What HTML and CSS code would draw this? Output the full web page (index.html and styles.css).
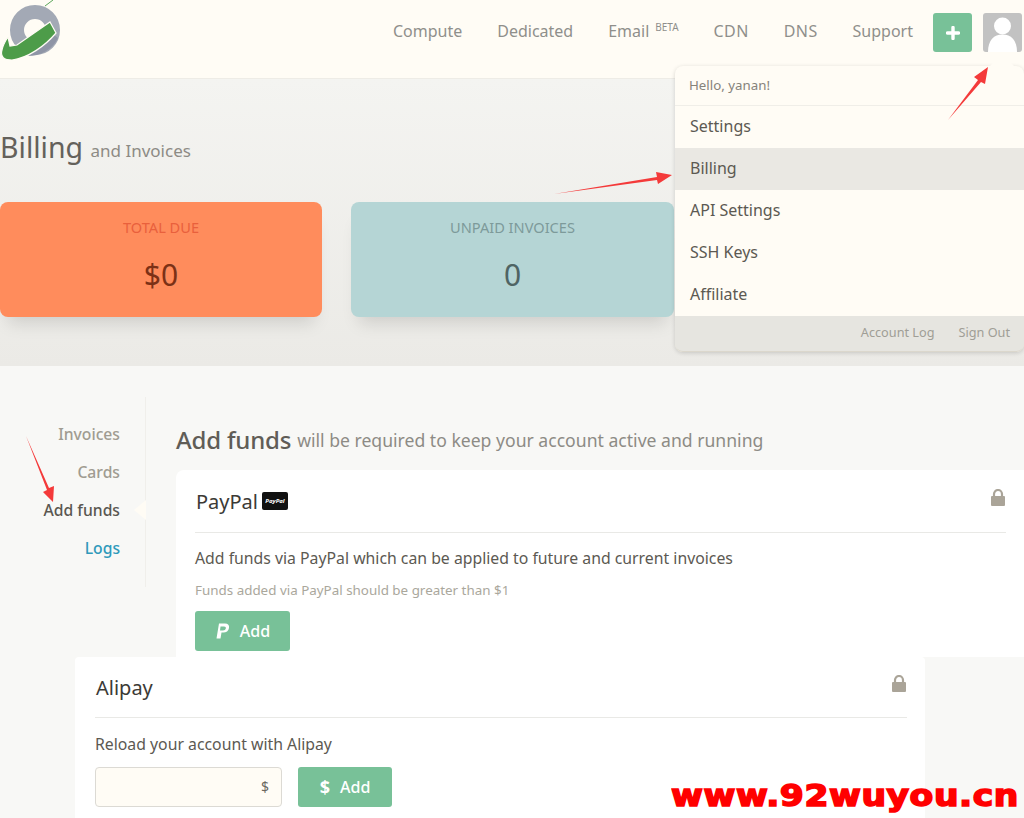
FILE: index.html
```html
<!DOCTYPE html>
<html lang="en">
<head>
<meta charset="utf-8">
<title>Billing and Invoices</title>
<link rel="stylesheet" href="styles.css">
</head>
<body>
<div class="page">
  <header class="topbar">
    <svg class="logo" width="62" height="62" viewBox="0 0 62 62">
      <path d="M45 6L53 0" stroke="#5aa65a" stroke-width="1" fill="none"/>
      <circle cx="35" cy="30" r="18" fill="none" stroke="#a3a9b5" stroke-width="14"/>
      <path d="M28 56C40 56 52 50 58 38L50 32Z" fill="#8f95a6"/>
      <path d="M50 22L56 33C45 46 28 58 12 60C4 60 0 57 2 50C3 45 6 40 8 37L10 46L17 45Z" fill="#4d9c49" stroke="#fffcf5" stroke-width="1.2"/>
    </svg>
    <nav class="mainnav">
      <a>Compute</a>
      <a>Dedicated</a>
      <a>Email<sup>BETA</sup></a>
      <a class="caps">CDN</a>
      <a class="caps">DNS</a>
      <a>Support</a>
    </nav>
    <div class="actions">
      <div class="plus">
        <svg width="14" height="14" viewBox="0 0 14 14"><path d="M7 1.5v11M1.5 7h11" stroke="#fff" stroke-width="3.4" stroke-linecap="round"/></svg>
      </div>
      <div class="avatar">
        <svg width="39" height="39" viewBox="0 0 39 39"><circle cx="19.5" cy="13" r="8.5" fill="#fff"/><path d="M5 39C5 27 11 21.500 19.500 21.500S34 27 34 39Z" fill="#fff"/></svg>
      </div>
    </div>
  </header>

  <section class="hero">
    <h1>Billing <small>and Invoices</small></h1>
    <div class="stats">
      <div class="stat stat-due">
        <div class="stat-label">TOTAL DUE</div>
        <div class="stat-value">$0</div>
      </div>
      <div class="stat stat-unpaid">
        <div class="stat-label">UNPAID INVOICES</div>
        <div class="stat-value">0</div>
      </div>
    </div>
  </section>

  <section class="content">
    <aside class="sidenav">
      <a>Invoices</a>
      <a>Cards</a>
      <a class="active">Add funds</a>
      <a class="logs">Logs</a>
    </aside>
    <main class="main">
      <h2>Add funds <small>will be required to keep your account active and running</small></h2>
      <div class="card">
        <div class="card-head">
          <span class="card-title">PayPal</span>
          <span class="pp-badge">PayPal</span>
          <svg class="lock" width="14" height="17" viewBox="0 0 14 17"><path d="M3 8V5a4 4 0 0 1 8 0v3" fill="none" stroke="#aaa498" stroke-width="2.200"/><rect y="7" width="14" height="10" rx="1" fill="#aaa498"/></svg>
        </div>
        <p class="card-text">Add funds via PayPal which can be applied to future and current invoices</p>
        <p class="card-note">Funds added via PayPal should be greater than $1</p>
        <button class="btn">
          <svg width="15" height="16" viewBox="0 0 15 16"><path d="M4 0.500h6c3 0 4.500 1.500 4 4.500c-0.500 3-2.800 4.500-5.500 4.500H6.500L5.500 15.500H1.500Z" fill="#fff"/><path d="M5.500 3.500h3.500c1.500 0 2 0.800 1.800 2c-0.300 1.300-1.300 2-2.800 2H5Z" fill="#78c198"/></svg>
          <span>Add</span>
        </button>
      </div>
    </main>
  </section>

  <div class="dropdown">
    <div class="dd-hello">Hello, yanan!</div>
    <a class="dd-item">Settings</a>
    <a class="dd-item dd-active">Billing</a>
    <a class="dd-item">API Settings</a>
    <a class="dd-item">SSH Keys</a>
    <a class="dd-item">Affiliate</a>
    <div class="dd-foot"><a>Account Log</a><a>Sign Out</a></div>
  </div>

  <div class="alipay">
    <div class="card-head alipay-head">
      <span class="card-title">Alipay</span>
      <svg class="lock" width="14" height="17" viewBox="0 0 14 17"><path d="M3 8V5a4 4 0 0 1 8 0v3" fill="none" stroke="#aaa498" stroke-width="2.200"/><rect y="7" width="14" height="10" rx="1" fill="#aaa498"/></svg>
    </div>
    <p class="card-text alipay-text">Reload your account with Alipay</p>
    <div class="alipay-form">
      <div class="amount">$</div>
      <button class="btn btn-alipay"><span class="dollar">$</span><span>Add</span></button>
    </div>
  </div>

  <svg class="arrows" width="1024" height="818" viewBox="0 0 1024 818">
    <path d="M948 120L978 80L974 77L988 67L985 84L981 82Z" fill="#f43a3a"/>
    <path d="M554 194L657 177L656 172L672 175L658 184L657 180Z" fill="#f43a3a"/>
    <path d="M26 436L49 488L54 486L53 502L43 492L47 490Z" fill="#f43a3a"/>
  </svg>
  <div class="watermark">www.92wuyou.cn</div>
</div>
</body>
</html>
```
FILE: styles.css
```css
* { box-sizing: border-box; }
html, body { margin: 0; padding: 0; }
body { font-family: "Noto Sans", "Open Sans", sans-serif; color: #555149; }
.page { position: relative; width: 1024px; height: 818px; overflow: hidden; display: flex; flex-direction: column; background: #f8f8f6; }

.topbar { height: 79px; flex: none; display: flex; align-items: flex-start; background: #fffcf5; border-bottom: 1px solid #eeece6; }
.logo { display: block; flex: none; }
.mainnav { margin-left: auto; display: flex; gap: 35px; padding-top: 19px; font-size: 16px; line-height: 24px; color: #8f8f8b; }
.mainnav sup { font-size: 10px; line-height: 0; margin-left: 6px; vertical-align: 6px; }
.mainnav .caps { letter-spacing: .4px; }
.actions { display: flex; gap: 11px; margin-left: 20px; padding: 13px 2px 0 0; }
.plus { width: 39px; height: 39px; border-radius: 3px; background: #78c198; display: flex; align-items: center; justify-content: center; }
.avatar { width: 39px; height: 39px; border-radius: 3px; background: #c2c2c2; overflow: hidden; }
.avatar svg { display: block; }

.hero { height: 287px; flex: none; background: linear-gradient(#f4f4f1, #ebeae6); padding-top: 48px; }
.hero h1 { margin: 0; font-size: 28.5px; line-height: 40px; font-weight: 400; color: #64615b; }
.hero h1 small { font-size: 17px; color: #8d8b85; vertical-align: 1px; }
.stats { display: flex; gap: 29px; margin-top: 31px; }
.stat { width: 322px; height: 115px; border-radius: 8px; text-align: center; padding-top: 15px; box-shadow: 0 14px 16px -8px rgba(0,0,0,.13); }
.stat-label { font-size: 14.6px; line-height: 20px; }
.stat-value { font-size: 30px; line-height: 40px; margin-top: 18px; }
.stat-due { background: #ff8c5c; }
.stat-due .stat-label { color: #e9603c; }
.stat-due .stat-value { color: #7c3116; }
.stat-unpaid { width: 323px; background: #b5d5d5; }
.stat-unpaid .stat-label { color: #7d9a9a; }
.stat-unpaid .stat-value { color: #4f6464; }

.content { flex: 1; display: flex; }
.sidenav { width: 146px; height: 190px; margin-top: 31px; padding: 25px 25px 0 0; border-right: 1px solid #f0efeb; display: flex; flex-direction: column; align-items: flex-end; gap: 14px; font-size: 15.7px; font-weight: 500; line-height: 24px; color: #a09c91; position: relative; }
.sidenav .active { color: #5a5751; }
.sidenav .logs { color: #2f9abb; }
.sidenav .active::after { content: ""; position: absolute; right: -1px; top: 103px; border: 10px solid transparent; border-left-width: 0; border-right-width: 12px; border-right-color: #fffcf5; }
.main { flex: 1; padding: 59px 0 0 30px; min-width: 0; }
.main h2 { margin: 0 0 15px; font-size: 24px; line-height: 30px; font-weight: 500; color: #605d57; white-space: nowrap; letter-spacing: -.2px; }
.main h2 small { font-size: 17.6px; font-weight: 400; color: #8d8b85; vertical-align: 2px; letter-spacing: 0; }
.card { background: #fff; border-radius: 8px 0 0 0; height: 187px; padding: 0 18px 0 19px; }
.card-head { height: 63px; display: flex; align-items: center; gap: 4px; border-bottom: 1px solid #e9e9e6; position: relative; }
.card-title { font-size: 20px; color: #3c3a36; margin-left: 1px; }
.pp-badge { width: 26px; height: 18px; border-radius: 2px; background: #111; color: #fff; font-size: 6px; font-weight: 700; font-style: italic; display: flex; align-items: center; justify-content: center; }
.lock { position: absolute; right: 1px; top: 19px; }
.card-text { margin: 13px 0 0; font-size: 15.8px; line-height: 24px; color: #5c5952; white-space: nowrap; }
.card-note { margin: 10px 0 0; font-size: 13.4px; line-height: 20px; color: #aaa79c; }
.btn { margin-top: 11px; width: 95px; height: 40px; border: 0; border-radius: 3px; background: #78c198; color: #fff; font: inherit; font-size: 16px; font-weight: 500; display: flex; align-items: center; justify-content: center; gap: 10px; padding: 0; }

.dropdown { position: absolute; left: 675px; top: 66px; width: 349px; height: 286px; background: #fffcf5; border-radius: 8px; box-shadow: 0 1px 4px rgba(0,0,0,.16); display: flex; flex-direction: column; }
.dropdown::before { content: ""; position: absolute; right: 10px; top: -12px; border: 12px solid transparent; border-top-width: 0; border-bottom-color: #fffcf5; }
.dd-hello { height: 40px; padding-left: 14px; font-size: 13.3px; line-height: 38px; color: #86837b; border-bottom: 1px solid #f0eee8; }
.dd-item { height: 42px; padding-left: 15px; font-size: 16px; line-height: 41px; color: #5c5952; }
.dd-active { background: #eae8e3; }
.dd-foot { flex: 1; background: #e6e5e0; border-radius: 0 0 8px 8px; display: flex; justify-content: flex-end; gap: 24px; padding-right: 14px; font-size: 12.7px; line-height: 33px; color: #a09e96; border-bottom: 1px solid #dbd7cc; }

.alipay { position: absolute; left: 75px; top: 657px; width: 850px; height: 161px; background: #fff; border-radius: 4px 4px 0 0; padding: 0 18px 0 20px; }
.alipay-head { height: 61px; }
.alipay-head .lock { right: 1px; top: 18px; }
.alipay-text { margin-top: 14px; }
.alipay-form { display: flex; gap: 16px; margin-top: 11px; }
.amount { width: 187px; height: 40px; background: #fffcf5; border: 1px solid #dcdad4; border-radius: 4px; text-align: right; padding-right: 12px; font-size: 14px; line-height: 38px; color: #6a675f; }
.btn-alipay { margin: 0; width: 94px; }
.dollar { font-size: 18px; font-weight: 700; }

.arrows { position: absolute; left: 0; top: 0; pointer-events: none; }
.watermark { position: absolute; left: 671px; top: 776px; font-family: "DejaVu Sans", sans-serif; font-weight: 700; font-size: 30px; line-height: 40px; color: #ff0000; -webkit-text-stroke: 1.6px #ff0000; white-space: nowrap; letter-spacing: 0.5px; transform: scaleX(1.15); transform-origin: left center; }
```
